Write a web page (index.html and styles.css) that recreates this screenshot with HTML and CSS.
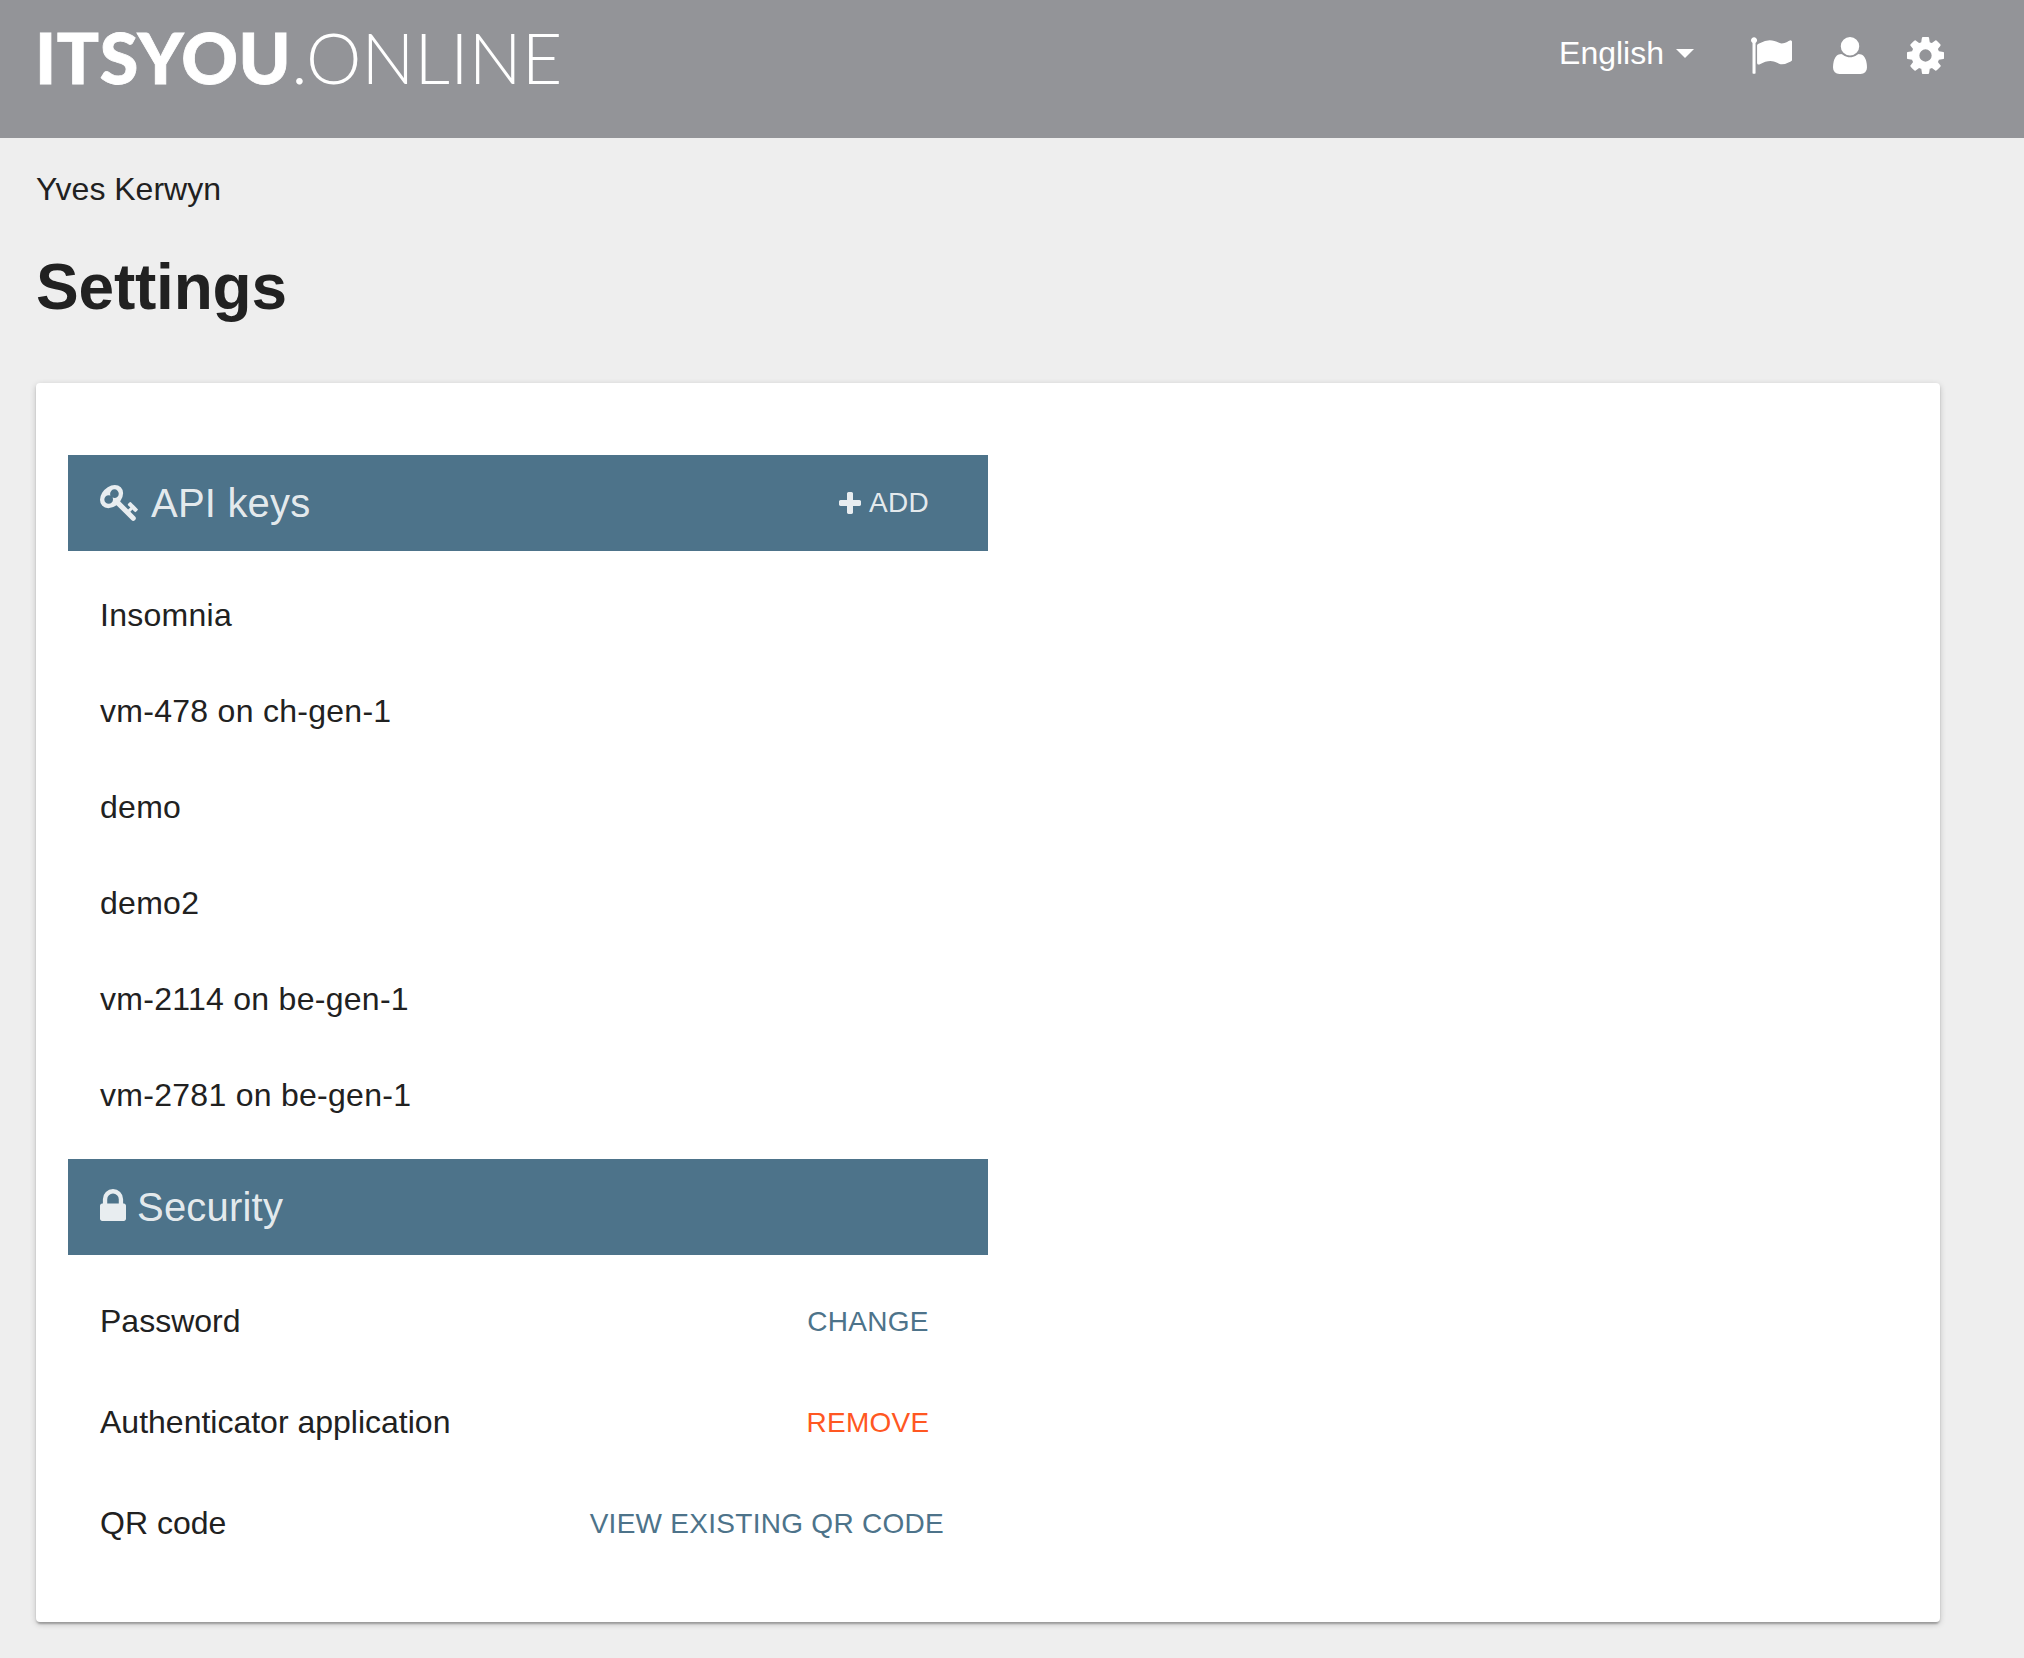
FILE: index.html
```
<!DOCTYPE html>
<html lang="en">
<head>
<meta charset="utf-8">
<title>Settings</title>
<link rel="stylesheet" href="styles.css">
</head>
<body>
<header class="topbar">
  <div class="logo"><span class="logo-strong">ITSYOU</span><span class="logo-thin">.ONLINE</span></div>
  <nav class="topnav">
    <span class="language">English</span>
    <span class="caret"></span>
    <svg class="icon-flag" viewBox="64 0 1728 1536"><path transform="translate(0 1408) scale(1 -1)" d="M320 1280q0 -72 -64 -110v-1266q0 -13 -9.5 -22.5t-22.5 -9.5h-64q-13 0 -22.5 9.5t-9.5 22.5v1266q-64 38 -64 110q0 53 37.5 90.5t90.5 37.5t90.5 -37.5t37.5 -90.5zM1792 1216v-763q0 -25 -12.5 -38.5t-39.5 -27.5q-215 -116 -369 -116q-61 0 -123.5 22t-108.5 48t-115.5 48t-142.5 22q-192 0 -464 -146q-17 -9 -33 -9q-26 0 -45 19t-19 45v742q0 32 31 55q21 14 79 43q236 120 421 120q107 0 200 -29t219 -88q38 -19 88 -19q54 0 117.5 21t110 47t88 47t54.5 21q26 0 45 -19t19 -45z"/></svg>
    <svg class="icon-user" viewBox="0 0 1408 1536"><path transform="translate(0 1408) scale(1 -1)" d="M1408 131q0 -120 -73 -189.5t-194 -69.5h-874q-121 0 -194 69.5t-73 189.5q0 53 3.5 103.5t14 109t26.5 108.5t43 97.5t62 81t85.5 53.5t111.5 20q9 0 42 -21.5t74.5 -48t108 -48t133.5 -21.5t133.5 21.5t108 48t74.5 48t42 21.5q61 0 111.5 -20t85.5 -53.5t62 -81t43 -97.5t26.5 -108.5t14 -109t3.5 -103.5zM1088 1024q0 -159 -112.5 -271.5t-271.5 -112.5t-271.5 112.5t-112.5 271.5t112.5 271.5t271.5 112.5t271.5 -112.5t112.5 -271.5z"/></svg>
    <svg class="icon-cog" viewBox="128 128 1536 1536"><path d="M1152 896q0-106-75-181t-181-75-181 75-75 181 75 181 181 75 181-75 75-181zm512-109v222q0 12-8 23t-20 13l-185 28q-19 54-39 91 35 50 107 138 10 12 10 25t-9 23q-27 37-99 108t-94 71q-12 0-26-9l-138-108q-44 23-91 38-16 136-29 186-7 28-36 28h-222q-14 0-24.5-8.5t-11.5-21.5l-28-184q-49-16-90-37l-141 107q-10 9-25 9-14 0-25-11-126-114-165-168-7-10-7-23 0-12 8-23 15-21 51-66.5t54-70.5q-27-50-41-99l-183-27q-13-2-21-12.5t-8-23.5v-222q0-12 8-23t19-13l186-28q14-46 39-92-40-57-107-138-10-12-10-24 0-10 9-23 26-36 98.5-107.5t94.5-71.5q13 0 26 10l138 107q44-23 91-38 16-136 29-186 7-28 36-28h222q14 0 24.5 8.5t11.5 21.5l28 184q49 16 90 37l142-107q9-9 24-9 13 0 25 10 129 119 165 170 7 8 7 22 0 12-8 23-15 21-51 66.5t-54 70.5q26 50 41 98l183 28q13 2 21 12.5t8 23.5z"/></svg>
  </nav>
</header>
<main class="page">
  <div class="user-name">Yves Kerwyn</div>
  <h1 class="title">Settings</h1>
  <section class="card">
    <div class="column">
      <div class="bar">
        <svg class="icon-key" viewBox="0 128 1684 1592"><path d="M832 512q0-80-56-136t-136-56-136 56-56 136q0 42 19 83-41-19-83-19-80 0-136 56t-56 136 56 136 136 56 136-56 56-136q0-42-19-83 41 19 83 19 80 0 136-56t56-136zm851 704q0 17-49 66t-66 49q-9 0-28.5-16t-36.5-33-38.5-40-24.5-26l-96 96 220 220q28 28 28 68 0 42-39 81t-81 39q-40 0-68-28l-671-671q-176 131-365 131-163 0-265.5-102.5t-102.5-265.5q0-160 95-313t248-248 313-95q163 0 265.5 102.5t102.5 265.5q0 189-131 365l355 355 96-96q-3-3-26-24.5t-40-38.5-33-36.5-16-28.5q0-17 49-66t66-49q13 0 23 10 6 6 46 44.5t82 79.5 86.5 86 73 78 28.5 41z"/></svg>
        <h2 class="bar-title">API keys</h2>
        <button class="add"><svg class="icon-plus" viewBox="0 0 1408 1408"><path d="M1408 608v192q0 40-28 68t-68 28h-416v416q0 40-28 68t-68 28h-192q-40 0-68-28t-28-68v-416h-416q-40 0-68-28t-28-68v-192q0-40 28-68t68-28h416v-416q0-40 28-68t68-28h192q40 0 68 28t28 68v416h416q40 0 68 28t28 68z"/></svg><span>ADD</span></button>
      </div>
      <ul class="list">
        <li class="row">Insomnia</li>
        <li class="row">vm-478 on ch-gen-1</li>
        <li class="row">demo</li>
        <li class="row">demo2</li>
        <li class="row">vm-2114 on be-gen-1</li>
        <li class="row">vm-2781 on be-gen-1</li>
      </ul>
      <div class="bar">
        <svg class="icon-lock" viewBox="0 0 1152 1408"><path transform="translate(0 1408) scale(1 -1)" d="M320 768h512v192q0 106 -75 181t-181 75t-181 -75t-75 -181v-192zM1152 672v-576q0 -40 -28 -68t-68 -28h-960q-40 0 -68 28t-28 68v576q0 40 28 68t68 28h32v192q0 184 132 316t316 132t316 -132t132 -316v-192h32q40 0 68 -28t28 -68z"/></svg>
        <h2 class="bar-title">Security</h2>
      </div>
      <ul class="list">
        <li class="row row-action">Password<button class="action">CHANGE</button></li>
        <li class="row row-action">Authenticator application<button class="action action-warn">REMOVE</button></li>
        <li class="row row-action">QR code<button class="action">VIEW EXISTING QR CODE</button></li>
      </ul>
    </div>
  </section>
</main>
</body>
</html>
```
FILE: styles.css
```
* { box-sizing: border-box; }
body {
  margin: 0;
  height: 1658px;
  background: #eee;
  color: #212121;
  font-family: "Liberation Sans", Arial, sans-serif;
  font-size: 32px;
}
svg { display: block; fill: currentColor; flex: none; }
button { border: 0; background: none; font: inherit; color: inherit; }

.topbar {
  display: flex;
  justify-content: space-between;
  height: 138px;
  padding: 0 80px 0 35px;
  background: #939498;
  color: #fff;
}
.logo {
  padding-top: 15px;
  font-family: Lato, sans-serif;
  font-size: 70px;
  line-height: 84px;
  white-space: nowrap;
}
.logo-strong {
  font-weight: 900;
  letter-spacing: .6px;
  -webkit-text-stroke: .8px currentColor;
}
.logo-thin { font-weight: 300; letter-spacing: .2px; }
.topnav {
  display: flex;
  align-items: center;
  height: 74px;
  padding-top: 37px;
}
.language { margin-top: -6px; line-height: 36px; }
.caret {
  margin: -5px 57px 0 12px;
  border: 9px solid transparent;
  border-top-color: #fff;
  border-bottom: 0;
}
.icon-flag { width: 41px; height: 37px; margin-right: 41px; }
.icon-user { width: 34px; height: 37px; margin-right: 40px; }
.icon-cog { width: 37px; height: 37px; }

.page { padding: 33px 84px 0 36px; }
.user-name { line-height: 36px; }
.title {
  margin: 44px 0 59px;
  font-size: 64px;
  line-height: 73px;
  font-weight: 700;
  letter-spacing: -.2px;
}
.card {
  height: 1239px;
  padding: 72px 32px 32px;
  background: #fff;
  border-radius: 4px;
  box-shadow: 0 2px 6px rgba(0,0,0,.2), 0 2px 2px rgba(0,0,0,.14), 0 4px 2px -2px rgba(0,0,0,.12);
}
.column { width: 920px; }
.bar {
  display: flex;
  align-items: center;
  height: 96px;
  padding: 0 32px;
  background: #4d738a;
  color: rgba(255,255,255,.87);
}
.bar-title {
  margin: 0;
  font-size: 40px;
  line-height: 46px;
  font-weight: 400;
  letter-spacing: .2px;
}
.icon-key { width: 38px; height: 36px; margin-right: 13px; }
.icon-lock { width: 26px; height: 32px; margin: -4px 11px 0 0; }
.icon-plus { width: 22px; height: 22px; }
.add {
  display: flex;
  align-items: center;
  gap: 8px;
  margin-left: auto;
  padding: 0 27px 0 0;
  font-size: 28px;
  line-height: 32px;
  letter-spacing: .28px;
}
.list { margin: 0; padding: 16px 0; list-style: none; }
.row {
  display: flex;
  align-items: center;
  justify-content: space-between;
  height: 96px;
  padding: 0 32px;
  letter-spacing: .28px;
}
.row-action { height: 101px; letter-spacing: 0; }
.action {
  min-width: 176px;
  padding: 0 12px;
  color: #4d738a;
  font-size: 28px;
  line-height: 32px;
  letter-spacing: .28px;
}
.action-warn { color: #ff5722; }
```
